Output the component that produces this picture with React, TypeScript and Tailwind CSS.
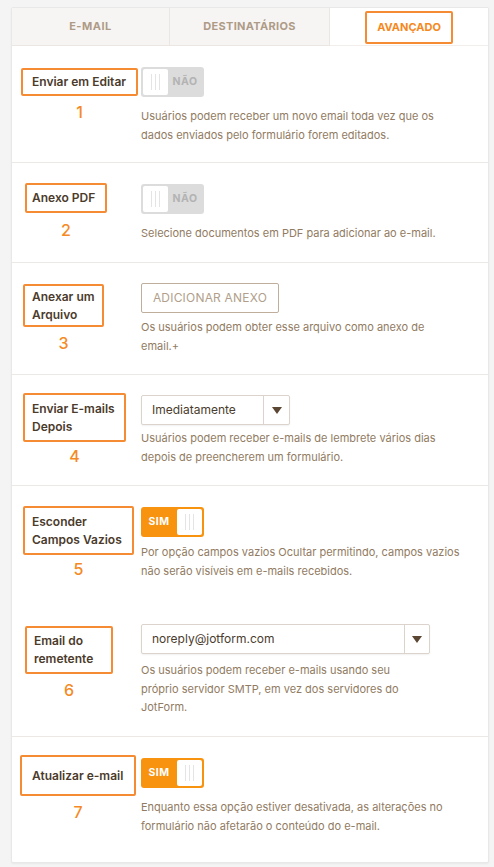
import React from "react";

const FONT = { fontFamily: 'Inter, "Open Sans", "Liberation Sans", sans-serif' };

type Row = {
    label: string[];
    num: string;
    boxMl: number;
    boxMt: number;
    boxW: number;
    boxH: number;
    textPl: number;
    numMt: number;
    control: React.ReactNode;
    desc: string[];
    descMt: number;
    ctrlMt: number;
};

const Grip = () => (
    <span className="flex gap-[3px] h-[16px]">
        <span className="w-px h-full bg-[#e4e4e4]" />
        <span className="w-px h-full bg-[#e4e4e4]" />
        <span className="w-px h-full bg-[#e4e4e4]" />
    </span>
);

const Toggle = ({ on }: { on: boolean }) =>
    on ? (
        <div className="w-[63px] h-[30px] rounded-[3px] bg-[#f8930f] flex items-center p-[2px]">
            <span className="flex-1 text-center text-[10.5px] font-bold text-white tracking-[0.5px] pr-[2px]">SIM</span>
            <span className="w-[25px] h-[26px] rounded-[2px] bg-white flex items-center justify-center">
                <Grip />
            </span>
        </div>
    ) : (
        <div className="w-[63px] h-[30px] rounded-[3px] bg-[#dcdcdc] flex items-center p-[2px]">
            <span className="w-[25px] h-[26px] rounded-[2px] bg-white flex items-center justify-center">
                <Grip />
            </span>
            <span className="flex-1 text-center text-[10.5px] font-bold text-[#b3b3b3] tracking-[0.5px]">NÃO</span>
        </div>
    );

const Select = ({ value, width, arrowW }: { value: string; width: number; arrowW: number }) => (
    <div
        className="h-[30px] flex items-stretch border border-[#dcd4cc] rounded-[2px] bg-white shadow-[0_1px_2px_rgba(0,0,0,0.06)]"
        style={{ width }}
    >
        <span className="flex-1 flex items-center pl-[10px] text-[12px] text-[#4b3c2e]">{value}</span>
        <span className="flex items-center justify-center border-l border-[#dcd4cc]" style={{ width: arrowW }}>
            <svg width="10" height="7" viewBox="0 0 10 7">
                <path d="M0 0 L10 0 L5 7 Z" fill="#5b4633" />
            </svg>
        </span>
    </div>
);

const rows: Row[] = [
    {
        label: ["Enviar em Editar"],
        num: "1",
        boxMl: 9, boxMt: 22, boxW: 117, boxH: 28, textPl: 9, numMt: 6,
        ctrlMt: 21,
        control: <Toggle on={false} />,
        descMt: 10,
        desc: ["Usuários podem receber um novo email toda vez que os", "dados enviados pelo formulário forem editados."],
    },
    {
        label: ["Anexo PDF"],
        num: "2",
        boxMl: 13, boxMt: 20, boxW: 82, boxH: 30, textPl: 5, numMt: 7,
        ctrlMt: 21,
        control: <Toggle on={false} />,
        descMt: 10,
        desc: ["Selecione documentos em PDF para adicionar ao e-mail."],
    },
    {
        label: ["Anexar um", "Arquivo"],
        num: "3",
        boxMl: 11, boxMt: 21, boxW: 81, boxH: 43, textPl: 7, numMt: 6,
        ctrlMt: 20,
        control: (
            <div className="w-[138px] h-[30px] border border-[#bfae9c] rounded-[2px] flex items-center justify-center text-[12px] text-[#b19f8b] tracking-[0.2px]">
                ADICIONAR ANEXO
            </div>
        ),
        descMt: 5,
        desc: ["Os usuários podem obter esse arquivo como anexo de", "email.+"],
    },
    {
        label: ["Enviar E-mails", "Depois"],
        num: "4",
        boxMl: 11, boxMt: 18, boxW: 103, boxH: 49, textPl: 7, numMt: 4,
        ctrlMt: 20,
        control: <Select value="Imediatamente" width={149} arrowW={26} />,
        descMt: 4,
        desc: ["Usuários podem receber e-mails de lembrete vários dias", "depois de preencherem um formulário."],
    },
    {
        label: ["Esconder", "Campos Vazios"],
        num: "5",
        boxMl: 11, boxMt: 20, boxW: 111, boxH: 49, textPl: 7, numMt: 4,
        ctrlMt: 21,
        control: <Toggle on={true} />,
        descMt: 6,
        desc: ["Por opção campos vazios Ocultar permitindo, campos vazios", "não serão visíveis em e-mails recebidos."],
    },
    {
        label: ["Email do", "remetente"],
        num: "6",
        boxMl: 13, boxMt: 20, boxW: 88, boxH: 48, textPl: 7, numMt: 6,
        ctrlMt: 18,
        control: <Select value="noreply@jotform.com" width={289} arrowW={25} />,
        descMt: 7,
        desc: ["Os usuários podem receber e-mails usando seu", "próprio servidor SMTP, em vez dos servidores do", "JotForm."],
    },
    {
        label: ["Atualizar e-mail"],
        num: "7",
        boxMl: 8, boxMt: 18, boxW: 116, boxH: 41, textPl: 10, numMt: 6,
        ctrlMt: 21,
        control: <Toggle on={true} />,
        descMt: 10,
        desc: ["Enquanto essa opção estiver desativada, as alterações no", "formulário não afetarão o conteúdo do e-mail."],
    },
];

const heights = [117, 100, 112, 111, 120, 131, 125];
const dividers = [true, true, true, true, false, true, false];

const SettingRow = ({ row, h, divider }: { row: Row; h: number; divider: boolean }) => (
    <div className={`flex ${divider ? "border-b border-[#ebe8e5]" : ""}`} style={{ height: h }}>
        <div className="w-[129px] shrink-0">
            <div
                className="border-2 border-[#f58b33] rounded-[2px] flex flex-col justify-center"
                style={{ marginLeft: row.boxMl, marginTop: row.boxMt, width: row.boxW, height: row.boxH, paddingLeft: row.textPl }}
            >
                {row.label.map((l) => (
                    <span key={l} className="text-[12px] leading-[18px] font-semibold text-[#4b3b2c] whitespace-nowrap">
                        {l}
                    </span>
                ))}
            </div>
            <div
                className="text-center text-[16px] leading-[20px] font-medium text-[#f58a24]"
                style={{ marginLeft: row.boxMl, width: row.boxW, marginTop: row.numMt }}
            >
                {row.num}
            </div>
        </div>
        <div className="flex-1">
            <div style={{ marginTop: row.ctrlMt }}>{row.control}</div>
            <div className="text-[11px] leading-[18.5px] text-[#917b62]" style={{ marginTop: row.descMt }}>
                {row.desc.map((d) => (
                    <div key={d}>{d}</div>
                ))}
            </div>
        </div>
    </div>
);

export default function App() {
    return (
        <div className="min-h-screen bg-[#f4f4f4] pl-[11px] pt-[7px] pb-[6px]" style={FONT}>
            <div className="w-[478px] bg-white border border-[#e8e8e8] rounded-[2px] shadow-[0_1px_2px_rgba(0,0,0,0.05)]">
                <div className="grid grid-cols-[158px_160px_1fr] h-[38px]">
                    <div className="bg-[#f7f5f3] border-r border-b border-[#ebe6e2] flex items-center justify-center text-[11px] font-bold tracking-[0.5px] text-[#ae9b87]">
                        E-MAIL
                    </div>
                    <div className="bg-[#f7f5f3] border-r border-b border-[#ebe6e2] flex items-center justify-center text-[11px] font-bold tracking-[0.3px] text-[#ae9b87]">
                        DESTINATÁRIOS
                    </div>
                    <div className="bg-white border-b border-[#f1eeeb] flex items-start justify-center pt-[3px]">
                        <span className="w-[88px] h-[33px] border-2 border-[#f58b33] rounded-[2px] flex items-center justify-center text-[11px] font-bold text-[#f5891e]">
                            AVANÇADO
                        </span>
                    </div>
                </div>
                {rows.map((r, i) => (
                    <SettingRow key={r.num} row={r} h={heights[i]} divider={dividers[i]} />
                ))}
            </div>
        </div>
    );
}
